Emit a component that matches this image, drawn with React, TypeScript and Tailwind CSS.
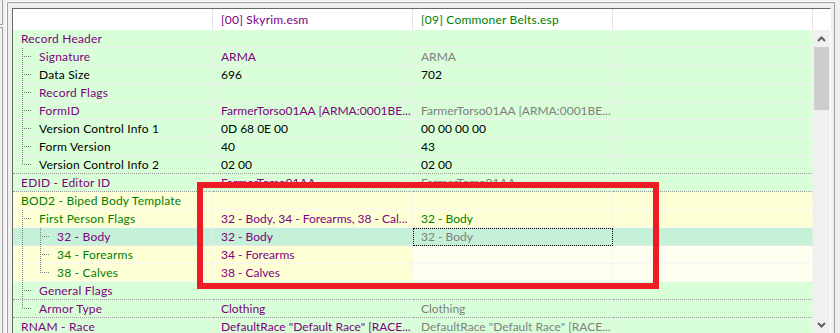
import React from "react";

type Bg = "green" | "yellow" | "sel" | "split";

interface Row {
  label: string;
  lc: string;
  v0?: string;
  c0?: string;
  v1?: string;
  c1?: string;
  bg: Bg;
  guides: string[];
  dark?: boolean;
  focus?: boolean;
}

const P = "text-[#800080]";
const GN = "text-[#008000]";
const K = "text-black";
const GR = "text-[#808080]";

const rows: Row[] = [
  { label: "Record Header", lc: P, bg: "green", guides: [] },
  { label: "Signature", lc: P, v0: "ARMA", c0: P, v1: "ARMA", c1: GR, bg: "green", guides: ["t"] },
  { label: "Data Size", lc: K, v0: "696", c0: K, v1: "702", c1: K, bg: "green", guides: ["t"] },
  { label: "Record Flags", lc: P, bg: "green", guides: ["t"] },
  {
    label: "FormID",
    lc: P,
    v0: "FarmerTorso01AA [ARMA:0001BE...",
    c0: P,
    v1: "FarmerTorso01AA [ARMA:0001BE...",
    c1: GR,
    bg: "green",
    guides: ["t"],
  },
  { label: "Version Control Info 1", lc: K, v0: "0D 68 0E 00", c0: K, v1: "00 00 00 00", c1: K, bg: "green", guides: ["t"] },
  { label: "Form Version", lc: K, v0: "40", c0: K, v1: "43", c1: K, bg: "green", guides: ["t"] },
  { label: "Version Control Info 2", lc: K, v0: "02 00", c0: K, v1: "02 00", c1: K, bg: "green", guides: ["l"], dark: true },
  { label: "EDID - Editor ID", lc: P, v0: "FarmerTorso01AA", c0: P, v1: "FarmerTorso01AA", c1: GR, bg: "green", guides: [], dark: true },
  { label: "BOD2 - Biped Body Template", lc: GN, bg: "yellow", guides: [] },
  {
    label: "First Person Flags",
    lc: GN,
    v0: "32 - Body, 34 - Forearms, 38 - Cal...",
    c0: P,
    v1: "32 - Body",
    c1: GN,
    bg: "yellow",
    guides: ["t"],
  },
  { label: "32 - Body", lc: P, v0: "32 - Body", c0: P, v1: "32 - Body", c1: GR, bg: "sel", guides: ["v", "t"], focus: true },
  { label: "34 - Forearms", lc: GN, v0: "34 - Forearms", c0: P, bg: "split", guides: ["v", "t"] },
  { label: "38 - Calves", lc: GN, v0: "38 - Calves", c0: P, bg: "split", guides: ["v", "l"] },
  { label: "General Flags", lc: P, bg: "green", guides: ["t"], dark: true },
  { label: "Armor Type", lc: P, v0: "Clothing", c0: P, v1: "Clothing", c1: GR, bg: "green", guides: ["l"], dark: true },
  {
    label: "RNAM - Race",
    lc: P,
    v0: 'DefaultRace "Default Race" [RACE...',
    c0: P,
    v1: 'DefaultRace "Default Race" [RACE...',
    c1: GR,
    bg: "green",
    guides: [],
  },
];

const bgFor = (bg: Bg): string[] => {
  if (bg === "yellow") return ["bg-[#ffffd6]", "bg-[#ffffd6]", "bg-[#ffffd6]", "bg-[#ffffd6]"];
  if (bg === "sel") return ["bg-[#c4f1d8]", "bg-[#c4f1d8]", "bg-[#c4f1d8]", "bg-[#c4f1d8]"];
  if (bg === "split") return ["bg-[#ffffd6]", "bg-[#ffffd6]", "bg-[#fffff0]", "bg-[#fffff0]"];
  return ["bg-[#d8ffd8]", "bg-[#d8ffd8]", "bg-[#d8ffd8]", "bg-[#d8ffd8]"];
};

const Guide = ({ t }: { t: string }) => (
  <svg width="18" height="17" className="shrink-0" shapeRendering="crispEdges">
    {(t === "v" || t === "t") && (
      <line x1="9.5" y1="0" x2="9.5" y2="17" stroke="#808080" strokeDasharray="1 1" />
    )}
    {t === "l" && <line x1="9.5" y1="0" x2="9.5" y2="9" stroke="#808080" strokeDasharray="1 1" />}
    {(t === "t" || t === "l") && (
      <line x1="11" y1="8.5" x2="19" y2="8.5" stroke="#808080" strokeDasharray="1 1" />
    )}
  </svg>
);

const Chevron = ({ down }: { down?: boolean }) => (
  <svg width="9" height="6" viewBox="0 0 9 6">
    <polyline
      points={down ? "1,1 4.5,4.5 8,1" : "1,5 4.5,1.5 8,5"}
      fill="none"
      stroke="#606060"
      strokeWidth="2"
    />
  </svg>
);

export default function App() {
  return (
    <div className="relative w-[840px] h-[333px] bg-[#f0f0f0] flex overflow-hidden text-[12px] [font-family:Lato,sans-serif]">
      {/* left pane edge */}
      <div className="w-[3px] shrink-0 flex flex-col">
        <div className="h-[25px] border-r border-b border-[#a0a0a0]" />
        <div className="mt-[2px] flex-1 border-r border-t border-[#a0a0a0]" />
      </div>
      <div className="w-[3px] shrink-0" />

      {/* tab sheet frame */}
      <div className="mt-[1px] w-[829px] shrink-0 border-l border-t border-white flex">
        <div className="flex-1 border-l border-t border-r border-[#a0a0a0] pl-[4px] pr-[3px] pt-[5px] flex">
          {/* tree view */}
          <div className="w-[819px] border-l border-t border-[#696969] border-r border-r-white bg-white flex flex-col">
            {/* header */}
            <div className="flex h-[21px] leading-[21px] bg-white tracking-[0.2px]">
              <div className="w-[200px] shrink-0 border-r border-[#e5e5e5]" />
              <div className="w-[200px] shrink-0 border-r border-[#e5e5e5] pl-2 text-[#800080]">[00] Skyrim.esm</div>
              <div className="w-[200px] shrink-0 border-r border-[#e5e5e5] pl-2 text-[#008000]">[09] Commoner Belts.esp</div>
              <div className="w-[200px] shrink-0 border-r border-[#e5e5e5]" />
              <div className="flex-1" />
            </div>

            {/* body */}
            <div className="flex flex-1 overflow-hidden">
              <div className="w-[800px] shrink-0 flex flex-col">
                {rows.map((r) => {
                  const bgs = bgFor(r.bg);
                  const bb = r.dark ? "border-b-[#9a9a9a]" : "border-b-[#f0f0f0]";
                  const cell = `w-[200px] shrink-0 border-r border-b border-dotted border-r-[#f0f0f0] ${bb} whitespace-nowrap overflow-hidden leading-[17px]`;
                  return (
                    <div key={r.label} className="flex h-[18px] shrink-0">
                      <div className={`${cell} ${bgs[0]} flex`}>
                        {r.guides.map((g, i) => (
                          <Guide key={i} t={g} />
                        ))}
                        <span className={`pl-2 tracking-[0.2px] ${r.lc}`}>{r.label}</span>
                      </div>
                      <div className={`${cell} ${bgs[1]} pl-2 ${r.c0 ?? ""}`}>{r.v0}</div>
                      <div
                        className={`${cell} ${bgs[2]} pl-2 ${r.c1 ?? ""} ${
                          r.focus ? "outline-1 outline-dotted outline-black -outline-offset-1" : ""
                        }`}
                      >
                        {r.v1}
                      </div>
                      <div className={`${cell} ${bgs[3]}`} />
                    </div>
                  );
                })}
              </div>

              {/* scrollbar */}
              <div className="w-[17px] shrink-0 bg-[#f0f0f0] flex flex-col">
                <div className="h-[17px] flex items-center justify-center">
                  <Chevron />
                </div>
                <div className="h-[63px] mx-[1px] bg-[#cdcdcd]" />
                <div className="flex-1" />
                <div className="h-[17px] flex items-center justify-center">
                  <Chevron down />
                </div>
              </div>
            </div>
          </div>
        </div>
      </div>

      {/* red highlight annotation */}
      <div className="absolute left-[197px] top-[182px] w-[462px] h-[107px] border-[6px] border-[#ed1c24]" />
    </div>
  );
}
